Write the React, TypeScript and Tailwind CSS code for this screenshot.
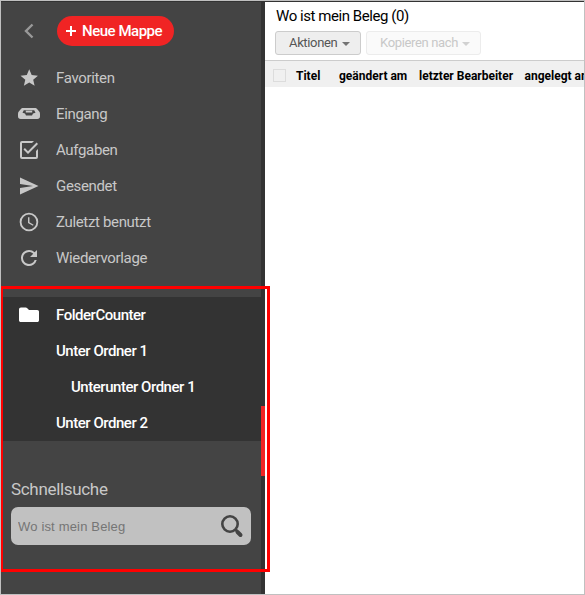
import React, { useState } from 'react';

const Star = () => (
  <path d="M12 17.27 18.18 21l-1.64-7.03L22 9.24l-7.19-.61L12 2 9.19 8.63 2 9.24l5.46 4.73L5.82 21z" transform="translate(1.8 1.6) scale(.87)" />
);

const Tray = () => (
  <path
    fillRule="evenodd"
    d="M6 6h12c.9 0 1.500.2 2.100.9l2.100 2.700c.6.7.8 1.300.8 2.300v2.300c0 1.800-1 2.800-2.700 2.800H3.700C2 17 1 16 1 14.200v-2.300c0-1 .2-1.600.8-2.300l2.100-2.700C4.500 6.200 5.100 6 6 6zM6.800 8.300 5.500 10.800l2.500.6 1 2.100h6l1-2.100 2.500-.6-1.300-2.500zM8.800 8.700h6.400v1.800H8.800z"
  />
);

const Task = () => (
  <path d="M19 3H5a2 2 0 0 0-2 2v14a2 2 0 0 0 2 2h14a2 2 0 0 0 2-2v-8l-2 2v6H5V5h10l2-2zM7.900 10.100 6.500 11.500 11 16 21 6l-1.400-1.400L11 13.200z" />
);

const Send = () => <path d="M3 20.500 21.500 12 3 3.500v6.600L16 12 3 13.900z" />;

const Clock = () => (
  <path d="M12 2a10 10 0 1 0 0 20 10 10 0 0 0 0-20zm0 18a8 8 0 1 1 0-16 8 8 0 0 1 0 16zm.5-13H11v6l5.250 3.150.75-1.230-4.500-2.670z" transform="translate(.8 .8) scale(.93)" />
);

const Reload = () => (
  <path d="M17.650 6.350A7.960 7.960 0 0 0 12 4a8 8 0 1 0 7.730 10h-2.080A6 6 0 1 1 12 6c1.660 0 3.140.69 4.220 1.780L13 11h7V4z" />
);

const Folder = () => (
  <path d="M4 4.500h4.800c.5 0 .9.200 1.200.500L12 7h8.200c1.100 0 1.800.8 1.800 1.800v8.400c0 1.100-.7 1.800-1.800 1.800H3.800C2.700 19 2 18.300 2 17.200V6.500c0-1.200.8-2 2-2z" />
);

const navItems = [
  { label: 'Favoriten', icon: Star },
  { label: 'Eingang', icon: Tray },
  { label: 'Aufgaben', icon: Task },
  { label: 'Gesendet', icon: Send },
  { label: 'Zuletzt benutzt', icon: Clock },
  { label: 'Wiedervorlage', icon: Reload },
];

const folders = [
  { label: 'FolderCounter', indent: 'pl-0', icon: Folder },
  { label: 'Unter Ordner 1', indent: 'pl-[39px]' },
  { label: 'Unterunter Ordner 1', indent: 'pl-[54px]' },
  { label: 'Unter Ordner 2', indent: 'pl-[39px]' },
];

const columns = [
  { label: 'Titel', width: 'w-[43px]' },
  { label: 'geändert am', width: 'w-[80px]' },
  { label: 'letzter Bearbeiter', width: 'w-[105.500px]' },
  { label: 'angelegt am', width: 'w-[80px]' },
];

const Caret = () => (
  <svg width="8" height="4" viewBox="0 0 8 4" fill="currentColor" className="mt-px shrink-0 opacity-80">
    <path d="M0 0h8L4 4z" />
  </svg>
);

export default function App() {
  const [query, setQuery] = useState('');

  return (
    <div className="relative flex w-[585px] h-[595px] overflow-hidden border border-[#c0c0c0] bg-white font-['Roboto',sans-serif]">
      <aside className="w-[260px] shrink-0 border-t border-[#333333] bg-[#444444] text-[#c8c8c8]">
        <div className="flex items-center h-[58px]">
          <button className="ml-[22px]">
            <svg width="12" height="16" viewBox="0 0 12 16" fill="none" stroke="#999999" strokeWidth="2.400">
              <path d="M9.500 1.500 3 8l6.500 6.500" />
            </svg>
          </button>
          <button className="ml-[22px] flex h-[30px] w-[117px] items-center whitespace-nowrap rounded-full bg-[#f02424] pl-[9px] text-[15px] font-medium tracking-[-0.48px] text-white">
            <svg width="10" height="10" viewBox="0 0 10 10" fill="white" className="mr-[6px]">
              <path d="M4 0h2v4h4v2H6v4H4V6H0V4h4z" />
            </svg>
            Neue Mappe
          </button>
        </div>

        <nav>
          {navItems.map((item) => (
            <div key={item.label} className="flex h-9 items-center pl-4 text-[15px] tracking-[-0.340px]">
              <svg width="24" height="24" viewBox="0 0 24 24" fill="currentColor" className="mr-[15px]">
                <item.icon />
              </svg>
              {item.label}
            </div>
          ))}
        </nav>

        <div className="mt-[21px] bg-[#333333] pl-4 text-[15px] font-medium tracking-[-0.470px] text-white">
          {folders.map((folder) => (
            <div key={folder.label} className={`flex h-9 items-center ${folder.indent}`}>
              {folder.icon && (
                <svg width="24" height="24" viewBox="0 0 24 24" fill="currentColor" className="mr-[15px]">
                  <folder.icon />
                </svg>
              )}
              {folder.label}
            </div>
          ))}
        </div>

        <div className="mt-[37px] px-[10px]">
          <h2 className="text-[17px] leading-[22px] tracking-[-0.320px]">Schnellsuche</h2>
          <div className="mt-[7px] flex h-[38px] items-center rounded-[7px] bg-[#c1c1c1] pl-[7px] pr-[7px]">
            <input
              value={query}
              onChange={(e) => setQuery(e.target.value)}
              placeholder="Wo ist mein Beleg"
              className="w-0 flex-1 pt-px font-['Liberation_Sans',sans-serif] text-[13px] tracking-[0.170px] text-[#444444] outline-none placeholder:text-[#757575]"
            />
            <svg width="24" height="24" viewBox="0 0 24 24" fill="none" stroke="#444444">
              <circle cx="10" cy="10" r="7.700" strokeWidth="2.600" />
              <path d="m15.500 15.500 2 2" strokeWidth="3" />
              <path d="m17.500 18 3 3" strokeWidth="4" strokeLinecap="round" />
            </svg>
          </div>
        </div>
      </aside>

      <div className="w-1 shrink-0 bg-[#333333] pt-[405px]">
        <div className="h-[70px] bg-[#f02424]" />
      </div>

      <main className="min-w-0 flex-1 border-t border-[#333333]">
        <h1 className="pl-[11px] pt-[4px] text-[15px] leading-5 tracking-[-0.440px] text-black">Wo ist mein Beleg (0)</h1>
        <div className="mt-[5px] flex gap-[5px] pl-[10px] text-[13px] tracking-[-0.350px]">
          <button className="flex h-6 w-[86px] items-center justify-between whitespace-nowrap rounded-[3px] border border-[#cccccc] bg-[#eeeeee] pl-[13px] pr-[10px] text-[#555555]">
            Aktionen
            <Caret />
          </button>
          <button className="flex h-6 w-[115px] items-center justify-between whitespace-nowrap rounded-[3px] border border-[#ececec] bg-[#fafafa] pl-[13px] pr-[10px] text-[#c8c8c8]">
            Kopieren nach
            <Caret />
          </button>
        </div>
        <div className="mt-[5px] flex h-[27px] items-center overflow-hidden border-t border-[#cccccc] bg-[#f0f0f0] pl-[8px] pt-[3px] text-[12px] font-bold text-black">
          <span className="mr-[10px] h-[13px] w-[13px] shrink-0 border border-[#dcdcdc]" />
          {columns.map((col) => (
            <span key={col.label} className={`shrink-0 whitespace-nowrap ${col.width}`}>
              {col.label}
            </span>
          ))}
        </div>
      </main>

      {/* highlight frame around folders and quick search */}
      <div className="pointer-events-none absolute left-[-1px] top-[285px] h-[286px] w-[270px] border-[3px] border-[#ff0000]" />
      <div className="pointer-events-none absolute left-[-1px] top-0 h-full w-px bg-[#c0c0c0]" />
    </div>
  );
}
